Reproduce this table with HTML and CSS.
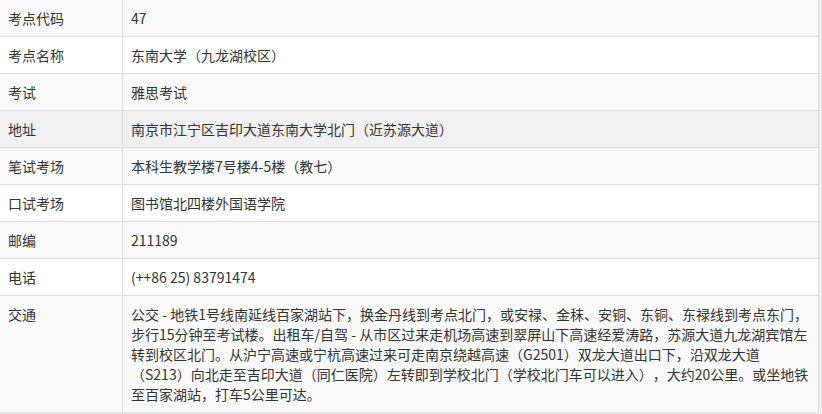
FILE: index.html
```html
<!DOCTYPE html>
<html lang="zh-CN">
<head>
  <meta charset="UTF-8">
  <meta name="viewport" content="width=device-width, initial-scale=1.0">
  <title>考点信息</title>
  <link rel="stylesheet" href="styles.css">
</head>
<body>
  <table class="info-table">
    <tbody>
      <tr>
        <th>考点代码</th>
        <td>47</td>
      </tr>
      <tr>
        <th>考点名称</th>
        <td>东南大学（九龙湖校区）</td>
      </tr>
      <tr>
        <th>考试</th>
        <td>雅思考试</td>
      </tr>
      <tr class="active">
        <th>地址</th>
        <td>南京市江宁区吉印大道东南大学北门（近苏源大道）</td>
      </tr>
      <tr>
        <th>笔试考场</th>
        <td>本科生教学楼7号楼4-5楼（教七）</td>
      </tr>
      <tr>
        <th>口试考场</th>
        <td>图书馆北四楼外国语学院</td>
      </tr>
      <tr>
        <th>邮编</th>
        <td>211189</td>
      </tr>
      <tr>
        <th>电话</th>
        <td>(++86 25) 83791474</td>
      </tr>
      <tr>
        <th>交通</th>
        <td>公交 - 地铁1号线南延线百家湖站下，换金丹线到考点北门，或安禄、金秣、安铜、东铜、东禄线到考点东门，步行15分钟至考试楼。出租车/自驾 - 从市区过来走机场高速到翠屏山下高速经爱涛路，苏源大道九龙湖宾馆左转到校区北门。从沪宁高速或宁杭高速过来可走南京绕越高速（G2501）双龙大道出口下，沿双龙大道（S213）向北走至吉印大道（同仁医院）左转即到学校北门（学校北门车可以进入），大约20公里。或坐地铁至百家湖站，打车5公里可达。</td>
      </tr>
    </tbody>
  </table>
</body>
</html>
```

FILE: styles.css
```css
body {
  margin: 0;
  padding: 0;
  background-color: #eeeeee;
  font-family: "Noto Sans CJK SC", "Microsoft YaHei", sans-serif;
  font-size: 14px;
  color: #333333;
  text-spacing-trim: space-all;
}
.info-table {
  width: 819px;
  border-collapse: collapse;
  border-spacing: 0;
  background-color: #ffffff;
  border: 1px solid #dddddd;
  border-top: none;
  border-left: none;
  margin-top: -1px;
}
.info-table th,
.info-table td {
  padding: 8px 8px;
  line-height: 20px;
  text-align: left;
  vertical-align: top;
  border: 1px solid #dddddd;
}
.info-table th {
  width: 106px;
  font-weight: normal;
  border-left: none;
}
.info-table tr:nth-child(odd) {
  background-color: #f9f9f9;
}
.info-table tr.active {
  background-color: #f0f0f0;
}
```
